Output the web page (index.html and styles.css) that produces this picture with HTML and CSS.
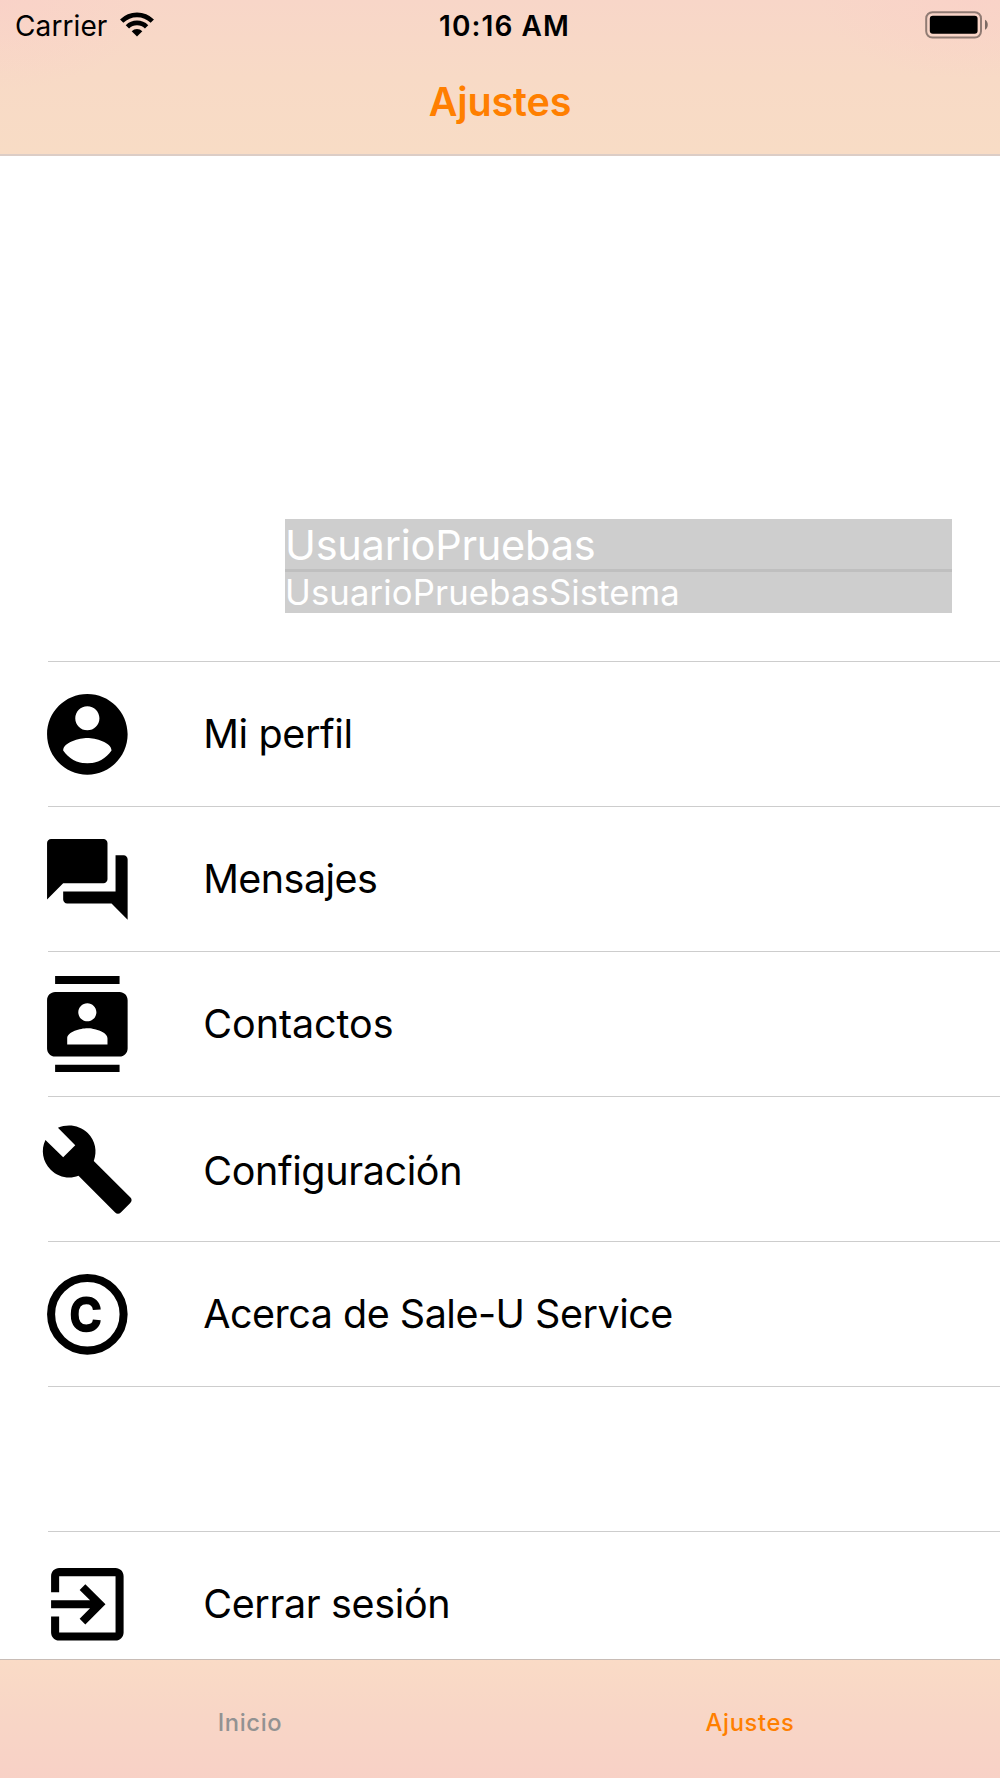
FILE: index.html
```html
<!DOCTYPE html>
<html lang="es">
<head>
<meta charset="utf-8">
<title>Ajustes</title>
<link rel="stylesheet" href="styles.css">
</head>
<body>
<div class="screen">
  <header class="header">
    <div class="status">
      <div class="status-left">
        <span class="carrier">Carrier</span>
        <svg class="wifi" viewBox="0 0 34 25" fill="none" stroke="#000" stroke-width="4.7">
          <path d="M1.7 9.2a21.65 21.65 0 0 1 30.6 0"/>
          <path d="M7.4 14.9a13.6 13.6 0 0 1 19.2 0"/>
          <path d="M17 24.5l-5.3-5.3a7.5 7.5 0 0 1 10.6 0z" fill="#000" stroke="none"/>
        </svg>
      </div>
      <span class="time">10:16 AM</span>
      <svg class="battery" viewBox="0 0 64 28">
        <rect x="1.2" y="1.2" width="54.8" height="25.3" rx="6.2" fill="none" stroke="#000" stroke-opacity=".42" stroke-width="2"/>
        <rect x="4.8" y="4.8" width="47.8" height="18" rx="3"/>
        <path d="M60 8.8c3.7 1.8 3.7 8.2 0 10z" fill-opacity=".5"/>
      </svg>
    </div>
    <h1 class="title">Ajustes</h1>
  </header>

  <main class="content">
    <section class="profile">
      <div class="user-name">UsuarioPruebas</div>
      <div class="user-system">UsuarioPruebasSistema</div>
    </section>

    <ul class="menu">
      <li class="item">
        <svg class="icon" viewBox="0 0 24 24"><path d="M12 2C6.48 2 2 6.48 2 12s4.48 10 10 10 10-4.48 10-10S17.52 2 12 2zm0 3c1.66 0 3 1.34 3 3s-1.34 3-3 3-3-1.34-3-3 1.34-3 3-3zm0 14.2c-2.5 0-4.71-1.28-6-3.22.03-1.99 4-3.08 6-3.08 1.99 0 5.97 1.09 6 3.08-1.29 1.94-3.5 3.22-6 3.22z"/></svg>
        <span class="label profile-label">Mi perfil</span>
      </li>
      <li class="item">
        <svg class="icon" viewBox="0 0 24 24"><path d="M21 6h-2v9H6v2c0 .55.45 1 1 1h11l4 4V7c0-.55-.45-1-1-1zm-4 6V3c0-.55-.45-1-1-1H3c-.55 0-1 .45-1 1v14l4-4h10c.55 0 1-.45 1-1z"/></svg>
        <span class="label messages-label">Mensajes</span>
      </li>
      <li class="item">
        <svg class="icon" viewBox="0 0 24 24"><path d="M20 0H4v2h16V0zM4 24h16v-2H4v2zM20 4H4c-1.1 0-2 .9-2 2v12c0 1.1.9 2 2 2h16c1.1 0 2-.9 2-2V6c0-1.1-.9-2-2-2zm-8 2.75c1.24 0 2.25 1.01 2.25 2.25s-1.01 2.25-2.25 2.25S9.75 10.24 9.75 9 10.76 6.75 12 6.75zM17 17H7v-1.5c0-1.67 3.33-2.5 5-2.5s5 .83 5 2.5V17z"/></svg>
        <span class="label contacts-label">Contactos</span>
      </li>
      <li class="item">
        <svg class="icon" viewBox="0 0 24 24"><path d="M22.7 19l-9.1-9.1c.9-2.3.4-5-1.5-6.9-2-2-5-2.4-7.4-1.3L9 6 6 9 1.6 4.7C.4 7.1.9 10.1 2.9 12.1c1.9 1.9 4.6 2.4 6.9 1.5l9.1 9.1c.4.4 1 .4 1.4 0l2.3-2.3c.5-.4.5-1.1.1-1.4z"/></svg>
        <span class="label config-label">Configuración</span>
      </li>
      <li class="item">
        <svg class="icon" viewBox="0 0 24 24"><circle cx="12" cy="12" r="9" fill="none" stroke="#000" stroke-width="2"/><path d="M14.35 10.86c-.12-1.45-1.05-2.32-2.6-2.32-1.85 0-2.88 1.28-2.88 3.33v.27c0 2.05 1.03 3.33 2.88 3.33 1.48 0 2.5-.9 2.6-2.1" fill="none" stroke="#000" stroke-width="1.95"/></svg>
        <span class="label about-label">Acerca de Sale-U Service</span>
      </li>
      <li class="item"></li>
      <li class="item">
        <svg class="icon" viewBox="0 0 24 24"><path d="M10.09 15.59L11.5 17l5-5-5-5-1.41 1.41L12.67 11H3v2h9.67l-2.58 2.59zM19 3H5c-1.11 0-2 .9-2 2v4h2V5h14v14H5v-4H3v4c0 1.1.89 2 2 2h14c1.1 0 2-.9 2-2V5c0-1.1-.9-2-2-2z"/></svg>
        <span class="label logout-label">Cerrar sesión</span>
      </li>
    </ul>
  </main>

  <nav class="tabs">
    <span class="tab">Inicio</span>
    <span class="tab active">Ajustes</span>
  </nav>
</div>
</body>
</html>
```
FILE: styles.css
```css
* { box-sizing: border-box; }
body {
  margin: 0;
  background: #fff;
  color: #000;
  font-family: Inter, "Liberation Sans", sans-serif;
}
.screen {
  display: flex;
  flex-direction: column;
  width: 1000px;
  height: 1778px;
  overflow: hidden;
}
.header {
  flex: none;
  height: 156px;
  border-bottom: 2px solid #dccdc6;
  background:
    radial-gradient(ellipse 150px 90px at 0 0, rgba(250, 208, 200, .6), rgba(250, 208, 200, 0)),
    radial-gradient(ellipse 150px 80px at 97% 0, rgba(250, 208, 200, .6), rgba(250, 208, 200, 0)),
    linear-gradient(#f8d6c8, #f8dac6 50%, #f8dcc5);
}
.status {
  display: grid;
  grid-template-columns: 1fr auto 1fr;
  align-items: center;
  height: 53px;
  padding: 0 11px 0 15px;
  font-size: 28px;
  line-height: 53px;
}
.status-left {
  display: flex;
  align-items: center;
}
.carrier { letter-spacing: .1px; }
.wifi {
  width: 34px;
  height: 25px;
  margin: -4px 0 0 13px;
}
.time {
  margin-left: 5px;
  font-weight: 600;
  letter-spacing: 1.1px;
}
.battery {
  justify-self: end;
  width: 64px;
  height: 28px;
  margin-top: -4px;
}
.title {
  margin: 0;
  color: #ff7f00;
  font-size: 39.5px;
  font-weight: 600;
  letter-spacing: -.15px;
  line-height: 99px;
  text-align: center;
}
.content {
  flex: 1;
  min-height: 0;
  overflow: hidden;
}
.profile {
  width: 667px;
  margin: 363px 0 48px 285px;
  background: #cecece;
  color: #fff;
}
.user-name {
  height: 53px;
  border-bottom: 3px solid #bfbfbf;
  font-size: 41.5px;
  letter-spacing: -.24px;
  line-height: 53px;
}
.user-system {
  height: 41px;
  font-size: 34.7px;
  letter-spacing: .12px;
  line-height: 40px;
}
.menu {
  margin: 0 0 0 48px;
  padding: 0;
  list-style: none;
}
.item {
  display: flex;
  align-items: center;
  height: 145px;
  border-top: 1px solid #cdcdcd;
}
.icon {
  flex: none;
  width: 96.7px;
  height: 96.7px;
  margin-left: -9.5px;
}
.label {
  margin-left: 68px;
  font-size: 39.5px;
  line-height: 48px;
  white-space: nowrap;
}
.profile-label { letter-spacing: -.36px; }
.messages-label { letter-spacing: -.55px; }
.contacts-label { letter-spacing: -.05px; }
.config-label { padding-top: 4px; letter-spacing: -.38px; }
.about-label { letter-spacing: -.5px; }
.logout-label { letter-spacing: -.36px; }
.tabs {
  flex: none;
  display: grid;
  grid-template-columns: 1fr 1fr;
  height: 119px;
  padding-top: 7px;
  border-top: 1px solid #c8bcb6;
  background: linear-gradient(#fadbc6, #f8d6c6 45%, #f8d1c6);
  color: #929292;
  font-size: 23.7px;
  font-weight: 450;
  line-height: 112px;
  text-align: center;
}
.tab { letter-spacing: .65px; }
.active { color: #ff7f00; }
```
